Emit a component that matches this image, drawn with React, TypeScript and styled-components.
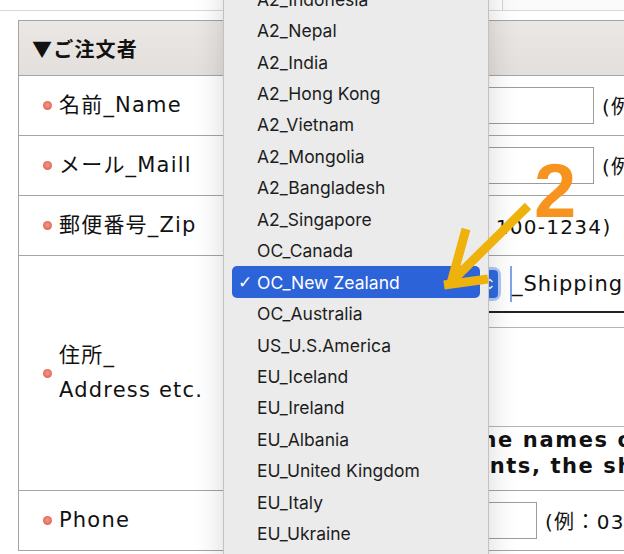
import React from 'react';
import styled, { createGlobalStyle } from 'styled-components';

const GlobalStyle = createGlobalStyle`
    html, body {
        margin: 0;
        padding: 0;
        background: #fff;
        overflow: hidden;
        height: 554px;
    }
    body {
        font-family: 'DejaVu Sans', 'Noto Sans CJK JP', sans-serif;
        color: #111;
    }
`;

const Page = styled.div`
    position: relative;
    width: 624px;
    height: 554px;
    overflow: hidden;
`;

const TopStrip = styled.div`
    display: grid;
    grid-template-columns: 502px 1fr;
    height: 10px;
    border-bottom: 1px solid #d8d8d8;
`;

const TopCell = styled.div`
    border-left: 1px solid #d4d4d4;
    background: #fbfbfb;
`;

const OrderTable = styled.div`
    margin: 9px 0 0 18px;
    width: 760px;
    border-top: 1px solid #a4a4a4;
    border-left: 1px solid #a4a4a4;
`;

const HeaderRow = styled.div`
    height: 54px;
    display: flex;
    align-items: center;
    padding-left: 13px;
    background: linear-gradient(#ebe7e4, #e3dfdc);
    border-bottom: 1px solid #a4a4a4;
    font-family: 'Noto Sans CJK JP', sans-serif;
    font-weight: 700;
    font-size: 20px;
    letter-spacing: 1.2px;
`;

const Row = styled.div<{ $height: number }>`
    display: grid;
    grid-template-columns: 230px 1fr;
    height: ${p => p.$height}px;
    border-bottom: 1px solid #a4a4a4;
`;

const LabelCell = styled.div`
    display: flex;
    align-items: center;
    gap: 7px;
    padding-left: 24px;
    border-right: 1px solid #a4a4a4;
    font-size: 21px;
    letter-spacing: 1.2px;
    line-height: 35px;
`;

const Dot = styled.span`
    flex: none;
    width: 9px;
    height: 9px;
    border-radius: 50%;
    background: radial-gradient(circle at 50% 45%, #f29a88 0%, #e2705c 60%, #d0604e 100%);
`;

const ValueCell = styled.div`
    display: flex;
    align-items: center;
    gap: 8px;
    padding-left: 12px;
    font-size: 20px;
    letter-spacing: 1.3px;
    white-space: nowrap;
`;

const TextInput = styled.div<{ $width: number }>`
    flex: none;
    width: ${p => p.$width}px;
    height: 35px;
    border: 1px solid #9c9c9c;
    background: #fff;
`;

const Hint = styled.span`
    white-space: nowrap;
`;

const AddressCell = styled.div`
    display: flex;
    flex-direction: column;
    padding-left: 12px;
`;

const ShipLine = styled.div`
    display: flex;
    align-items: center;
    height: 54px;
    padding-top: 1px;
    border-bottom: 2px solid #222;
`;

const SelectBox = styled.div`
    position: relative;
    flex: none;
    width: 237px;
    height: 28px;
    border-radius: 5px;
    background: #fff;
    box-shadow: 0 0 0 1px #b8c9ee, 0 0 0 3px rgba(110, 155, 240, 0.55);
`;

const Stepper = styled.span`
    position: absolute;
    right: 0;
    top: 0;
    width: 16px;
    height: 28px;
    border-radius: 4px;
    background: #2f6be0;
    display: flex;
    align-items: center;
    justify-content: center;
`;

const ShipInput = styled.div`
    margin-left: 12px;
    height: 36px;
    border-left: 2px solid #7fa4ec;
    display: flex;
    align-items: center;
    font-size: 21px;
    letter-spacing: 1px;
    white-space: nowrap;
`;

const SubBox = styled.div`
    margin-top: 14px;
    height: 98px;
    border-top: 1px solid #b4b4b4;
    border-bottom: 1px solid #b4b4b4;
`;

const NoteLine = styled.div<{ $indent: number }>`
    padding-left: ${p => p.$indent}px;
    font-weight: 700;
    font-size: 21px;
    letter-spacing: 1.6px;
    line-height: 26px;
    white-space: nowrap;
`;

const Menu = styled.div`
    position: absolute;
    left: 223px;
    top: -17.5px;
    width: 264px;
    padding-bottom: 40px;
    background: #ebebeb;
    border: 1px solid #c2c2c2;
    box-shadow: 0 0 28px rgba(0, 0, 0, 0.16);
    font-family: Inter, 'Noto Sans', sans-serif;
    font-size: 17.5px;
    color: #1d1d1d;
`;

const MenuItem = styled.div<{ $selected?: boolean }>`
    display: flex;
    align-items: center;
    height: 31.44px;
    margin: 0 8px;
    padding-left: 6px;
    border-radius: 5px;
    background: ${p => (p.$selected ? '#2c63d9' : 'transparent')};
    color: ${p => (p.$selected ? '#fff' : 'inherit')};
    white-space: nowrap;
`;

const Check = styled.span`
    width: 19px;
    flex: none;
    font-family: 'DejaVu Sans', sans-serif;
    font-size: 17px;
`;

const Arrow = styled.svg`
    position: absolute;
    left: 0;
    top: 0;
    pointer-events: none;
`;

const StepLabel = styled.div`
    position: absolute;
    left: 534px;
    top: 153px;
    font-family: 'Liberation Sans', Arial, sans-serif;
    font-weight: 700;
    font-size: 76px;
    line-height: 1;
    color: #f7941f;
`;

const countries = [
    'A2_Indonesia',
    'A2_Nepal',
    'A2_India',
    'A2_Hong Kong',
    'A2_Vietnam',
    'A2_Mongolia',
    'A2_Bangladesh',
    'A2_Singapore',
    'OC_Canada',
    'OC_New Zealand',
    'OC_Australia',
    'US_U.S.America',
    'EU_Iceland',
    'EU_Ireland',
    'EU_Albania',
    'EU_United Kingdom',
    'EU_Italy',
    'EU_Ukraine',
    'EU_Uzbekistan',
];

const selectedCountry = 'OC_New Zealand';

export default function App() {
    return (
        <Page>
            <GlobalStyle />
            <TopStrip>
                <div />
                <TopCell />
            </TopStrip>
            <OrderTable>
                <HeaderRow>▼ご注文者</HeaderRow>
                <Row $height={59}>
                    <LabelCell><Dot />名前_Name</LabelCell>
                    <ValueCell>
                        <TextInput $width={331} />
                        <Hint>(例：山田 太郎)</Hint>
                    </ValueCell>
                </Row>
                <Row $height={59}>
                    <LabelCell><Dot />メール_Maill</LabelCell>
                    <ValueCell>
                        <TextInput $width={331} />
                        <Hint>(例：info@example.com)</Hint>
                    </ValueCell>
                </Row>
                <Row $height={59}>
                    <LabelCell><Dot />郵便番号_Zip</LabelCell>
                    <ValueCell>
                        <TextInput $width={173} />
                        <Hint>(例：100-1234)</Hint>
                    </ValueCell>
                </Row>
                <Row $height={234}>
                    <LabelCell>
                        <Dot />
                        <span>住所_<br />Address etc.</span>
                    </LabelCell>
                    <AddressCell>
                        <ShipLine>
                            <SelectBox>
                                <Stepper>
                                    <svg width="8" height="14" viewBox="0 0 8 14">
                                        <path d="M1.5 5 L4 2.5 L6.5 5 M1.5 9 L4 11.5 L6.5 9" fill="none" stroke="#fff" strokeWidth="1.4" />
                                    </svg>
                                </Stepper>
                            </SelectBox>
                            <ShipInput>_Shipping address</ShipInput>
                        </ShipLine>
                        <SubBox />
                        <NoteLine $indent={1}>※ Please enter the names of all recipients.</NoteLine>
                        <NoteLine $indent={10}>With several points, the shipping address</NoteLine>
                    </AddressCell>
                </Row>
                <Row $height={59}>
                    <LabelCell><Dot />Phone</LabelCell>
                    <ValueCell>
                        <TextInput $width={274} />
                        <Hint>(例：03-1234-5678)</Hint>
                    </ValueCell>
                </Row>
            </OrderTable>

            <Menu>
                {countries.map(name => (
                    <MenuItem key={name} $selected={name === selectedCountry}>
                        <Check>{name === selectedCountry ? '✓' : ''}</Check>
                        {name}
                    </MenuItem>
                ))}
            </Menu>

            <Arrow width="624" height="554" viewBox="0 0 624 554">
                <g fill="none" stroke="#efb20c" strokeWidth="9" strokeLinecap="butt" strokeLinejoin="miter">
                    <path d="M528 206 L452 281" />
                    <path d="M466 229 L450 287" />
                    <path d="M444 285 L488 279" />
                </g>
            </Arrow>
            <StepLabel>2</StepLabel>
        </Page>
    );
}
